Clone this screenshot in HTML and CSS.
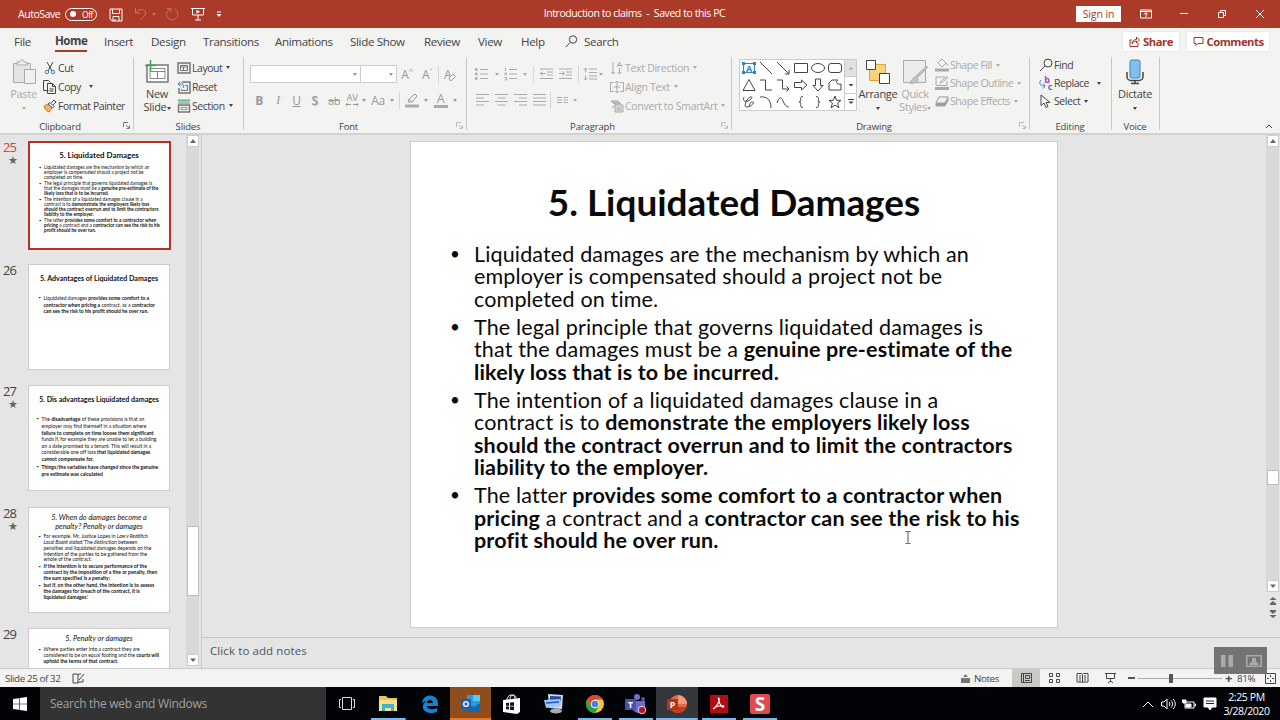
FILE: index.html
```
<!DOCTYPE html>
<html lang="en">
<head>
    <meta charset="UTF-8">
    <meta name="viewport" content="width=device-width, initial-scale=1.0">
    <title>Introduction to claims - Saved to this PC</title>
    <link rel="stylesheet" href="styles.css">
</head>
<body>

<!-- Title bar -->
<header class="titlebar">
    <div class="quick">
        <span class="autosave">AutoSave</span>
        <span class="toggle"><i></i>Off</span>
        <svg class="q-save" width="14" height="14" viewBox="0 0 14 14"><path d="M1 1h12v12H3l-2-2zM3.500 1v4.500h7V1M4 13V8.500h6V13M6 11v2"/></svg>
        <svg class="q-undo dim" width="14" height="14" viewBox="0 0 14 14"><path d="M1.500 1v5h5M2 5.500C5 1.500 10 1.500 11.500 5c1 3-2 5-5.500 8"/></svg>
        <b class="caret dim"></b>
        <svg class="q-redo dim" width="14" height="14" viewBox="0 0 14 14"><path d="M2 1.500h4v4M5.500 2C1 4 .500 8.500 3 11c3 3 8 2 9.500-1.500 1-3-.5-6-3-7.500"/></svg>
        <svg class="q-show" width="14" height="14" viewBox="0 0 14 14"><path d="M0 1.500h14M1.500 1.500v6.500h11V1.500M7 8v5M4 13h6"/><path class="solid" d="M5.500 2.800v4l3.500-2z"/></svg>
        <svg class="q-more" width="6" height="7" viewBox="0 0 6 7"><path d="M1 1h4"/><path class="solid" d="M.5 3h5L3 6z"/></svg>
    </div>
    <div class="doc-title">Introduction to claims &nbsp;-&nbsp; Saved to this PC</div>
    <div class="win">
        <button class="signin">Sign in</button>
        <svg width="12" height="10" viewBox="0 0 12 10"><path d="M.5 1h11v8H.5zM.5 2.500h11M6 8V4M4 5.500l2-2 2 2"/></svg>
        <svg width="12" height="10" viewBox="0 0 12 10"><path d="M2 4.500h8"/></svg>
        <svg width="12" height="10" viewBox="0 0 12 10"><path d="M2.500 3.500h5v5h-5zM4.500 3.500v-2h5v5h-2"/></svg>
        <svg width="12" height="10" viewBox="0 0 12 10"><path d="M2 1l8 8M10 1L2 9"/></svg>
    </div>
</header>

<!-- Ribbon tabs -->
<nav class="tabs">
    <a>File</a><a class="active">Home</a><a>Insert</a><a>Design</a><a>Transitions</a><a>Animations</a><a>Slide Show</a><a>Review</a><a>View</a><a>Help</a>
    <svg width="13" height="13" viewBox="0 0 13 13"><circle cx="8" cy="4.500" r="3.700"/><path d="M5.300 7.300L.8 12"/></svg>
    <a class="search">Search</a>
    <div class="actions">
        <button><svg width="11" height="11" viewBox="0 0 11 11"><path d="M3 4H1v6.500h8V7M3 8c0-3 2-4.500 4.500-4.500V1L10.500 4 7.500 7V5C5.500 5 4 6 3 8z"/></svg>Share</button>
        <button><svg width="11" height="11" viewBox="0 0 11 11"><path d="M1 1.500h9v6H5L3 9.500v-2H1z"/></svg>Comments</button>
    </div>
</nav>

<!-- Ribbon -->
<section class="ribbon">
    <div class="group clipboard">
        <div class="tools">
            <div class="big off">
                <svg width="26" height="26" viewBox="0 0 26 26"><path fill="#e4e4e6" d="M2.500 4.500h17v19h-17z"/><path d="M6 3h3c0-3 4-3 4 0h3v3H6z" fill="#eee"/><path fill="#f0f0f2" d="M13.500 10.500h11v14h-11z"/></svg>
                <span>Paste</span><span><b class="caret"></b></span>
            </div>
            <div class="rows">
                <div><svg width="14" height="14" viewBox="0 0 14 14"><path d="M4 1l5 9M10 1L5 10"/><g stroke="#2f86c5"><circle cx="4" cy="11" r="1.700"/><circle cx="10" cy="11" r="1.700"/></g></svg>Cut</div>
                <div><svg width="14" height="14" viewBox="0 0 14 14"><path d="M5.500 10.500h-5v-10h5l2 2M4.500 3.500h5l3 3v7h-8zM9.500 3.500v3h3M6.500 9h4M6.500 11h4"/></svg>Copy<b class="caret gap"></b></div>
                <div><svg width="14" height="14" viewBox="0 0 14 14"><path fill="#f3b36b" stroke="#d37a22" d="M1 7l4-2 4 4-3 4-2-1-.5-1.500L2 10z"/><path fill="#fff" d="M5 5l2-1.500 4 4L9.500 9zM8.500 4l2.500-3 2 2-3 3"/></svg>Format Painter</div>
            </div>
        </div>
        <div class="label">Clipboard<svg class="launch" width="7" height="7" viewBox="0 0 7 7"><path d="M.5 5V.5H5M3 3l3 3M6.500 3.500v3h-3"/></svg></div>
    </div>

    <div class="group slides">
        <div class="tools">
            <div class="big">
                <svg width="26" height="26" viewBox="0 0 26 26"><path fill="#fff" stroke="#777" stroke-width="1.500" d="M3 6h21v17H3z"/><path stroke="#888" d="M6 9.500h15v10H6zM6 12.500h15M13.500 12.500v7"/><path stroke="#3fa55a" stroke-width="1.500" d="M6.500 1v11M1 6.500h11"/></svg>
                <span>New</span><span>Slide<b class="caret"></b></span>
            </div>
            <div class="rows">
                <div><svg width="14" height="14" viewBox="0 0 14 14"><path fill="#eee" stroke="#777" stroke-width="1.500" d="M1 2h12v10H1z"/><path stroke="#777" d="M3.500 4.500h7v5h-7zM3.500 6h7M6.500 6v4"/></svg>Layout<b class="caret"></b></div>
                <div><svg width="14" height="14" viewBox="0 0 14 14"><path fill="#eee" stroke="#777" stroke-width="1.500" d="M5 2h8v11H2V8"/><path stroke="#777" d="M8 5.500h2.500v5h-6V9"/><path stroke="#2f86c5" d="M1 4h4c2 0 2 3 1 4M3.500 1.500L1 4l2.500 2.500"/></svg>Reset</div>
                <div><svg width="14" height="14" viewBox="0 0 14 14"><path stroke="#5fb878" stroke-width="2" d="M1 1.500h12"/><path stroke="#777" d="M1 4h12"/><path fill="#eee" stroke="#777" stroke-width="1.500" d="M1.500 6h11v7h-11z"/><path stroke="#999" d="M4 8.500h6v2H4z"/></svg>Section<b class="caret"></b></div>
            </div>
        </div>
        <div class="label plain">Slides</div>
    </div>

    <div class="group font off">
        <div class="tools stack">
            <div class="font-top">
                <span class="combo"><b class="caret"></b></span><span class="combo"><b class="caret"></b></span>
                <span>A<sup>^</sup></span><span>A<sup>ˇ</sup></span><i class="sep"></i>
                <span class="clear">A<svg width="8" height="8" viewBox="0 0 8 8"><path fill="#f3f3f1" d="M1 5l4-4 2.500 2.500-4 4H2z"/></svg></span>
            </div>
            <div class="font-bottom">
                <span class="bold">B</span><span class="ital">I</span><span class="und">U</span><span class="shadow">S</span><span class="strike">ab</span>
                <span class="av">AV<svg width="14" height="5" viewBox="0 0 14 5"><path d="M1 2.500h5M8 2.500h5M2.500 1L1 2.500 2.500 4M11.500 1L13 2.500 11.500 4"/></svg></span><b class="caret"></b>
                <span>Aa</span><b class="caret"></b><i class="sep"></i>
                <svg width="14" height="15" viewBox="0 0 14 15"><path d="M3 9l1-3 6-5 2 2-5 6zM4 6l3 3"/><path class="bar" d="M0 11.500h14v3H0z"/></svg><b class="caret"></b>
                <span class="color">A</span><b class="caret"></b>
            </div>
        </div>
        <div class="label">Font<svg class="launch" width="7" height="7" viewBox="0 0 7 7"><path d="M.5 5V.5H5M3 3l3 3M6.500 3.500v3h-3"/></svg></div>
    </div>

    <div class="group paragraph off">
        <div class="tools">
            <div class="stack para-left">
                <div class="para-top">
                    <svg width="14" height="14" viewBox="0 0 14 14"><path d="M5 2.500h8M5 7h8M5 11.500h8"/><path stroke-width="2.500" d="M0 2.500h2.500M0 7h2.500M0 11.500h2.500"/></svg><b class="caret"></b>
                    <svg width="14" height="14" viewBox="0 0 14 14"><path d="M5 2.500h8M5 7h8M5 11.500h8M1.500 1v3M.5 6h2v1.500h-2M.5 10.500h2v2.500h-2"/></svg><b class="caret"></b><i class="sep"></i>
                    <svg width="13" height="12" viewBox="0 0 13 12"><path d="M0 1h13M7 4h6M7 7h6M0 10.500h13M5.500 5.500h-5M2.500 3.500l-2 2 2 2"/></svg>
                    <svg width="13" height="12" viewBox="0 0 13 12"><path d="M0 1h13M7 4h6M7 7h6M0 10.500h13M0 5.500h5M3.500 3.500l2 2-2 2"/></svg><i class="sep"></i>
                    <svg width="14" height="14" viewBox="0 0 14 14"><path d="M6 2h8M6 5.500h8M6 9h8M6 12h8M2.500 1v4.500M.5 3l2-2 2 2M2.500 13V8.500M.5 11l2 2 2-2"/></svg><b class="caret"></b>
                </div>
                <div class="para-bottom">
                    <svg width="13" height="12" viewBox="0 0 13 12"><path d="M0 .5h13M0 4h8M0 7.500h13M0 11h8"/></svg>
                    <svg width="13" height="12" viewBox="0 0 13 12"><path d="M0 .5h13M2.500 4h8M0 7.500h13M2.500 11h8"/></svg>
                    <svg width="13" height="12" viewBox="0 0 13 12"><path d="M0 .5h13M5 4h8M0 7.500h13M5 11h8"/></svg>
                    <svg width="13" height="12" viewBox="0 0 13 12"><path d="M0 .5h13M0 4h13M0 7.500h13M0 11h13"/></svg><i class="sep"></i>
                    <svg width="11" height="8" viewBox="0 0 11 8"><path d="M0 1.500h5M6.500 1.500H11M0 4h5M6.500 4H11M0 6.500h5M6.500 6.500H11"/></svg><b class="caret"></b>
                </div>
            </div>
            <div class="rows">
                <div><svg width="14" height="14" viewBox="0 0 14 14"><path d="M3 1v12M1 11l2 2 2-2M7 6l2.500-5L12 6M8 4.500h3M9.500 7v6M7.500 11l2 2 2-2"/></svg>Text Direction<b class="caret"></b></div>
                <div><svg width="14" height="14" viewBox="0 0 14 14"><path d="M4 2.500H.5v9H4M10 2.500h3.500v9H10M7 1v12M5 3l2-2 2 2M5 11l2 2 2-2M4 7h6"/></svg>Align Text<b class="caret"></b></div>
                <div><svg width="14" height="14" viewBox="0 0 14 14"><path fill="#bbb" d="M1 2h7l3 3H4z"/><path fill="#ddd" d="M5 6h8v7H5z"/><path d="M6.500 9h5M6.500 11h5M2 9l3-3"/></svg>Convert to SmartArt<b class="caret"></b></div>
            </div>
        </div>
        <div class="label">Paragraph<svg class="launch" width="7" height="7" viewBox="0 0 7 7"><path d="M.5 5V.5H5M3 3l3 3M6.500 3.500v3h-3"/></svg></div>
    </div>

    <div class="group drawing">
        <div class="tools">
            <div class="gallery">
                <div class="shapes">
                    <svg viewBox="0 0 14 14"><path stroke="#2f86c5" d="M1.500 2.500h11v9h-11z"/><text class="glyph" x="7" y="10.500" font-size="9" fill="#2f86c5">A</text><path fill="#2f86c5" stroke="none" d="M0 1h3v3H0zM11 1h3v3h-3zM0 10h3v3H0zM11 10h3v3h-3z"/></svg>
                    <svg viewBox="0 0 14 14"><path d="M1 1l12 12"/></svg>
                    <svg viewBox="0 0 14 14"><path d="M1 1l12 12M13 9v4H9"/></svg>
                    <svg viewBox="0 0 14 14"><path d="M.5 2.500h13v9H.5z"/></svg>
                    <svg viewBox="0 0 14 14"><ellipse cx="7" cy="7" rx="6.500" ry="4.500"/></svg>
                    <svg viewBox="0 0 14 14"><rect x=".5" y="2.500" width="13" height="9" rx="2.500"/></svg>
                    <svg viewBox="0 0 14 14"><path d="M7 1.500L13 12.500H1z"/></svg>
                    <svg viewBox="0 0 14 14"><path d="M1 2h5.500v10H13"/></svg>
                    <svg viewBox="0 0 14 14"><path d="M1 2h5.500v9H13M10.500 8.500L13 11l-2.500 2.500"/></svg>
                    <svg viewBox="0 0 14 14"><path d="M.5 4.500H7.500V2l5.500 5-5.500 5V9.500H.5z"/></svg>
                    <svg viewBox="0 0 14 14"><path d="M4.500 1h5v6.500H12L7 13 2 7.500h2.500z"/></svg>
                    <svg viewBox="0 0 14 14"><path d="M1 12V5l3-3h6c-3 2-1 5 3 4v6z"/></svg>
                    <svg viewBox="0 0 14 14"><path d="M2 2c-2 5 3 6 7 2 3-3-2-3-4 1s-3 7 0 7 8-4 6-5-5 3-3 5"/></svg>
                    <svg viewBox="0 0 14 14"><path d="M1 2c7-1 11 3 11 11"/></svg>
                    <svg viewBox="0 0 14 14"><path d="M1 8c2-6 4-7 6-2s4 6 6 6"/></svg>
                    <svg viewBox="0 0 14 14"><path d="M9 1.500c-5 0 0 5.500-4 5.500 4 0-1 5.500 4 5.500"/></svg>
                    <svg viewBox="0 0 14 14"><path d="M5 1.500c5 0 0 5.500 4 5.500-4 0 1 5.500-4 5.500"/></svg>
                    <svg viewBox="0 0 14 14"><path d="M7 1l1.600 4.300H13L9.600 8l1.300 4.800L7 10.200l-3.900 2.600L4.400 8 1 5.300h4.400z"/></svg>
                </div>
                <div class="spin">
                    <span class="off"><svg width="6" height="6" viewBox="0 0 6 6"><path d="M.5 4.500h5L3 2z"/></svg></span>
                    <span><svg width="6" height="6" viewBox="0 0 6 6"><path d="M.5 2h5L3 4.500z"/></svg></span>
                    <span><svg width="6" height="6" viewBox="0 0 6 6"><path d="M0 0h6v1H0zM.5 2.500h5L3 5z"/></svg></span>
                </div>
            </div>
            <div class="big arrange">
                <svg width="26" height="26" viewBox="0 0 26 26"><path fill="#f9d27c" stroke="#e0a33e" d="M4.500 5.500h16v16h-16z"/><path fill="#fff" d="M1.500 1.500h9v9h-9zM14.500 14.500h10v10h-10z"/></svg>
                <span>Arrange</span><span><b class="caret"></b></span>
            </div>
            <div class="big off styles">
                <svg width="26" height="26" viewBox="0 0 26 26"><path fill="#ececee" d="M1.500 1.500h22v22h-22z"/><path fill="#c4c4c6" d="M25 9L16 18l-2-1L25 7zM14 18c-3 0-4 4-7 6 4 1 9 0 9-4z"/></svg>
                <span>Quick</span><span>Styles<b class="caret"></b></span>
            </div>
            <div class="rows tight off">
                <div><svg width="14" height="14" viewBox="0 0 14 14"><path d="M7 1l4 4-4 4-4-4zM11 5l2 3"/><path class="bar" d="M0 10.500h14v3H0z"/></svg>Shape Fill<b class="caret"></b></div>
                <div><svg width="14" height="14" viewBox="0 0 14 14"><path d="M10 1H1v8.500h11V5M5 7l1-2 6-4.500 1 1L7 6.500z"/><path class="bar" d="M0 11h14v3H0z"/></svg>Shape Outline<b class="caret"></b></div>
                <div><svg width="14" height="14" viewBox="0 0 14 14"><path fill="#999" d="M1 9l3-6h9v4l-3 5H1z"/><path fill="#eee" d="M4 3h9l-3 6H1z"/></svg>Shape Effects<b class="caret"></b></div>
            </div>
        </div>
        <div class="label">Drawing<svg class="launch off" width="7" height="7" viewBox="0 0 7 7"><path d="M.5 5V.5H5M3 3l3 3M6.500 3.500v3h-3"/></svg></div>
    </div>

    <div class="group editing">
        <div class="tools">
            <div class="rows tight">
                <div><svg width="14" height="14" viewBox="0 0 14 14"><circle cx="9" cy="5" r="4"/><path d="M6 8l-5 5"/></svg>Find</div>
                <div><svg width="14" height="14" viewBox="0 0 14 14"><text class="glyph" x="8" y="7" font-size="9" fill="#a14ba8">b</text><text class="glyph" x="11" y="13.500" font-size="9" fill="#2f86c5">c</text><path stroke="#2f86c5" d="M2 4c-3 4 0 6 4 6M4 7.500l2 2.500-2 2.500"/></svg>Replace<b class="caret gap"></b></div>
                <div><svg width="14" height="14" viewBox="0 0 14 14"><path fill="#fff" d="M2 1v10.500L5 9l2 4.500 2-1-2-4h4z"/></svg>Select<b class="caret"></b></div>
            </div>
        </div>
        <div class="label plain">Editing</div>
    </div>

    <div class="group voice">
        <div class="tools">
            <div class="big">
                <svg width="26" height="26" viewBox="0 0 26 26"><rect x="8" y="1" width="10" height="18" rx="1.500" fill="#83bfec" stroke="#3d83b8"/><path stroke-width="1.500" d="M5 13v4.500c0 2 1.500 4 4 4h8c2.500 0 4-2 4-4V13M13 22v3M9 24.500h8"/></svg>
                <span>Dictate</span><span><b class="caret"></b></span>
            </div>
        </div>
        <div class="label plain">Voice</div>
    </div>
    <svg class="collapse" width="8" height="5" viewBox="0 0 8 5"><path d="M1 4l3-3 3 3"/></svg>
</section>

<main class="work">
    <!-- Slide thumbnails -->
    <aside class="thumbs">
        <div class="item current">
            <div class="num">25<i>&#9733;</i></div>
            <div class="thumb t25">
                <h3>5. Liquidated Damages</h3>
                <ul>
                    <li>Liquidated damages are the mechanism by which an<br>employer is compensated should a project not be<br>completed on time.</li>
                    <li>The legal principle that governs liquidated damages is<br>that the damages must be a <b>genuine pre-estimate of the<br>likely loss that is to be incurred.</b></li>
                    <li>The intention of a liquidated damages clause in a<br>contract is to <b>demonstrate the employers likely loss<br>should the contract overrun and to limit the contractors<br>liability to the employer.</b></li>
                    <li>The latter <b>provides some comfort to a contractor when<br>pricing</b> a contract and a <b>contractor can see the risk to his<br>profit should he over run.</b></li>
                </ul>
            </div>
        </div>
        <div class="item">
            <div class="num">26</div>
            <div class="thumb t26">
                <h3>5. Advantages of Liquidated Damages</h3>
                <ul>
                    <li>Liquidated damages <b>provides some comfort to a<br>contractor when pricing a</b> contract, as a <b>contractor<br>can see the risk to his profit should he over run.</b></li>
                </ul>
            </div>
        </div>
        <div class="item">
            <div class="num">27<i>&#9733;</i></div>
            <div class="thumb t27">
                <h3>5. Dis advantages Liquidated damages</h3>
                <ul>
                    <li>The <b>disadvantage</b> of these provisions is that an<br>employer may find themself in a situation where<br><b>failure to complete on time looses them significant</b><br>funds if, for example they are unable to let a building<br>on a date promised to a tenant. This will result in a<br>considerable one off loss <b>that liquidated damages<br>cannot compensate for.</b></li>
                    <li><b>Things/the variables have changed since the genuine<br>pre estimate was calculated</b></li>
                </ul>
            </div>
        </div>
        <div class="item">
            <div class="num">28<i>&#9733;</i></div>
            <div class="thumb t28">
                <h3>5. When do damages become a<br>penalty? Penalty or damages</h3>
                <ul>
                    <li>For example, Mr. Justice Lopes in <em>Law v Redditch<br>Local Board stated:</em>'The distinction between<br>penalties and liquidated damages depends on the<br>intention of the parties to be gathered from the<br>whole of the contract.</li>
                    <li><b>If the intention is to secure performance of the<br>contract by the imposition of a fine or penalty, then<br>the sum specified is a penalty;</b></li>
                    <li><b>but if, on the other hand, the intention is to assess<br>the damages for breach of the contract, it is<br>liquidated damages.'</b></li>
                </ul>
            </div>
        </div>
        <div class="item">
            <div class="num">29</div>
            <div class="thumb t29">
                <h3>5. Penalty or damages</h3>
                <ul>
                    <li>Where parties enter into a contract they are<br>considered to be on equal footing and the <b>courts will<br>uphold the terms of that contract.</b></li>
                </ul>
            </div>
        </div>
    </aside>
    <div class="scroll left">
        <span><svg width="8" height="8" viewBox="0 0 8 8"><path d="M1 6h6L4 2z"/></svg></span><i></i><span><svg width="8" height="8" viewBox="0 0 8 8"><path d="M1 2.500h6L4 6z"/></svg></span>
    </div>

    <!-- Slide editor -->
    <div class="editor">
        <div class="canvas">
            <article class="slide">
                <h1>5. Liquidated Damages</h1>
                <ul>
                    <li>Liquidated damages are the mechanism by which an<br>employer is compensated should a project not be<br>completed on time.</li>
                    <li>The legal principle that governs liquidated damages is<br>that the damages must be a <b>genuine pre-estimate of the<br>likely loss that is to be incurred.</b></li>
                    <li>The intention of a liquidated damages clause in a<br>contract is to <b>demonstrate the employers likely loss<br>should the contract overrun and to limit the contractors<br>liability to the employer.</b></li>
                    <li>The latter <b>provides some comfort to a contractor when<br>pricing</b> a contract and a <b>contractor can see the risk to his<br>profit should he over run.</b></li>
                </ul>
                <svg class="ibeam" width="6" height="13" viewBox="0 0 6 13"><path d="M.5.5h2L3 1l.5-.5h2M3 1v11M.5 12.500h2L3 12l.5.500h2"/></svg>
            </article>
            <div class="scroll right">
                <span><svg width="8" height="8" viewBox="0 0 8 8"><path d="M1 6h6L4 2z"/></svg></span><i></i><span><svg width="8" height="8" viewBox="0 0 8 8"><path d="M1 2.500h6L4 6z"/></svg></span>
                <svg class="page" width="8" height="8" viewBox="0 0 8 8"><path d="M4 0l3.500 3h-7zM4 4l3.500 3h-7zM1 7h6v1H1z"/></svg>
                <svg class="page" width="8" height="8" viewBox="0 0 8 8"><path d="M4 8l3.500-3h-7zM4 4l3.500-3h-7zM1 0h6v1H1z"/></svg>
            </div>
        </div>
        <div class="notes">Click to add notes</div>
    </div>
</main>

<!-- Status bar -->
<footer class="status">
    <span class="count">Slide 25 of 32</span>
    <svg width="13" height="11" viewBox="0 0 13 11"><path d="M6 10H1V1h4l1 1v8l1-1h4V6M6 2l1-1h2M7 7l5-6"/></svg>
    <span class="notes-btn"><svg width="9" height="9" viewBox="0 0 9 9"><path class="solid" d="M4.500 0L7 3H2zM0 4h9v5H0z"/></svg>Notes</span>
    <div class="views">
        <span class="on"><svg width="13" height="12" viewBox="0 0 13 12"><path d="M1.500 1.500h10v9h-10zM3.500 1.500v9M5.500 3.500h4v3h-4zM5 8.500h5"/></svg></span>
        <span><svg width="13" height="12" viewBox="0 0 13 12"><path d="M1.500 1.500h3v3h-3zM8.500 1.500h3v3h-3zM1.500 7.500h3v3h-3zM8.500 7.500h3v3h-3z"/></svg></span>
        <span><svg width="13" height="12" viewBox="0 0 13 12"><path d="M1 1.500h4.500l1 1 1-1H12v8.500H7.500l-1 1-1-1H1zM6.500 2.500v8M3 4h2M3 6h2M3 8h2M8 4h2M8 6h2M8 8h2"/></svg></span>
        <span><svg width="13" height="12" viewBox="0 0 13 12"><path d="M1 1.500h11M2.500 1.500v5h8v-5M6.500 6.500V10M4 11l2.500-2L9 11"/></svg></span>
    </div>
    <div class="zoom"><span class="minus"></span><span class="track"><i></i></span><span class="plus">+</span><span class="pct">81%</span>
        <svg width="11" height="11" viewBox="0 0 11 11"><path d="M.5.5h10v10H.5zM5.500 2v2M5.500 7v2M2 5.500h2M7 5.500h2"/></svg></div>
</footer>

<!-- Taskbar -->
<footer class="taskbar">
    <span class="start"><svg width="14" height="14" viewBox="0 0 14 14"><path fill="#fff" d="M0 2l6-.8v5.500H0zM6.600 1.100L14 0v6.700H6.600zM0 7.300h6v5.500L0 12zM6.600 7.300H14V14l-7.400-1z"/></svg></span>
    <span class="searchbox">Search the web and Windows</span>
    <div class="apps">
        <span><svg width="18" height="14" viewBox="0 0 18 14"><path fill="none" stroke="#ddd" d="M4.500.5h9v12h-9zM3 2.500H1.500v8H3M15 2.500h1.500v8H15"/></svg></span>
        <span class="run"><svg width="20" height="20" viewBox="0 0 20 20"><path fill="#e9c75b" d="M1 2h7l2 2h9v13H1z"/><path fill="#f8e08a" d="M1 6h18v11H1z"/><path fill="#3fb4c8" d="M4 10h12v7h-3v-3H7v3H4z"/></svg></span>
        <span><svg width="20" height="20" viewBox="0 0 20 20"><path fill="#1583d4" d="M2 9c1-10 16-10 16 1v2H7c0 4 6 4 10 2v3.500C10 21 2 18 3 12c.5-3 2-4 4-5-2 0-4 1-5 2zm5 0h6c0-4-6-4-6 0z"/></svg></span>
        <span class="alert"><svg width="20" height="20" viewBox="0 0 20 20"><path fill="#1fa0e4" d="M6 1h13v17H6z"/><path fill="#59c8f5" d="M12 1h7v6h-7z"/><path fill="#1468b3" d="M6 9l7 4 6-4v9H6z"/><rect y="5" width="10" height="10" rx="1" fill="#1064b0"/><text class="glyph" x="5" y="13" font-size="8.500" fill="#fff">O</text></svg></span>
        <span><svg width="18" height="20" viewBox="0 0 18 20"><path fill="#fff" d="M0 6l17-2v14l-3 2-14-2z"/><path fill="none" stroke="#fff" d="M4 6c0-6 8-7 8-1M7 5c0-5 6-5 6-1"/><path fill="#111" d="M3 9l3-.3v3H3zM7 8.600l4-.4v3.500H7zM3 12.500h3v3l-3-.3zM7 12.500h4v3.700L7 15.700z"/></svg></span>
        <span><svg width="20" height="20" viewBox="0 0 20 20"><ellipse cx="12" cy="17" rx="6" ry="2.500" fill="#aaa"/><path fill="#cfd6e4" d="M4 0l15 1-1 14-13-1z"/><path fill="#2247a8" d="M6 2l11 .5-.5 5L6 7z"/><path fill="#9cc7f2" d="M0 6l16-1 1 7-15 2z"/><path stroke="#2653b5" stroke-width="1.500" d="M2 9l13-1"/></svg></span>
        <span class="run"><svg width="20" height="20" viewBox="0 0 20 20"><circle cx="10" cy="10" r="9" fill="#f7c52c"/><path fill="#df4336" d="M2.200 5.500A9 9 0 0 1 17.800 5.500H10L6 12z"/><path fill="#2c9f4b" d="M2.200 5.500A9 9 0 0 0 10 19l4-7-8 .5z"/><circle cx="10" cy="10" r="4.200" fill="#fff"/><circle cx="10" cy="10" r="3.300" fill="#3f7fe8"/></svg></span>
        <span class="run"><svg width="22" height="20" viewBox="0 0 22 20"><circle cx="12" cy="3" r="3" fill="#6c70cf"/><circle cx="18" cy="5" r="2" fill="#5256b5"/><path fill="#6a6dcb" d="M7 7h13v7c0 3-3 5-6 5s-6-2-7-5z"/><rect y="5" width="11" height="11" rx="1" fill="#4a4fb5"/><text class="glyph" x="5.500" y="13.500" font-size="8.500" fill="#fff">T</text><circle cx="17" cy="16" r="3.700" fill="#b80f2e" stroke="#ddd"/></svg></span>
        <span class="run open"><svg width="20" height="20" viewBox="0 0 20 20"><circle cx="11" cy="10" r="9" fill="#e2674a"/><path fill="#f49a7c" d="M11 1a9 9 0 0 1 9 9h-9z"/><path fill="#c23d20" d="M2.500 13h17a9 9 0 0 1-17 0z"/><rect y="5" width="11" height="11" rx="1" fill="#b7341a"/><text class="glyph" x="5.500" y="13.500" font-size="8.500" fill="#fff">P</text></svg></span>
        <span class="run"><svg width="20" height="20" viewBox="0 0 20 20"><path fill="#b30b12" d="M1 1h18v18H1z"/><path fill="none" stroke="#fff" stroke-width="1.200" d="M9.500 4c2 1 0 6-4 10-2 2-1-1 4-2s6 0 5 1-4-2-5-8z"/></svg></span>
        <span class="run"><svg width="20" height="20" viewBox="0 0 20 20"><rect width="20" height="20" rx="2" fill="#e04a50"/><text class="glyph" x="10" y="16.500" font-size="19" fill="#fff">S</text></svg></span>
    </div>
    <div class="tray">
        <svg width="12" height="8" viewBox="0 0 12 8"><path d="M1 7l5-5 5 5"/></svg>
        <svg width="15" height="12" viewBox="0 0 15 12"><path d="M.5 4H3l3-3v10L3 8H.5zM8 4c1 1 1 3 0 4M10 2.500c2 2 2 5 0 7M12 1c3 3 3 7 0 10"/></svg>
        <svg width="14" height="10" viewBox="0 0 14 10"><path d="M3 3h9v6H3zM12.500 5h1v2h-1"/><path fill="#fff" d="M4 5h5v3H4zM0 1h4v3H1z"/></svg>
        <svg width="14" height="14" viewBox="0 0 14 14"><path fill="#fff" d="M1 1h12v9H9l-2 3-2-3H1z"/><path class="lines" d="M3 4h8M3 6.500h8"/></svg>
        <div class="clock">2:25 PM<br>3/28/2020</div>
    </div>
</footer>

<!-- Recorder controls over the status bar -->
<div class="recorder">
    <svg width="12" height="12" viewBox="0 0 12 12"><path d="M0 0h4.500v12H0zM7.500 0H12v12H7.500z"/></svg>
    <svg width="16" height="12" viewBox="0 0 16 12"><path fill-rule="evenodd" d="M0 0h16v12H0zM1.500 1.500v9h13v-9zM6 3h4v3.500l2.500 2V10h-9V8.500L6 6.500z"/></svg>
</div>

</body>
</html>
```
FILE: styles.css
```
* {
    box-sizing: border-box;
}
body {
    margin: 0;
    width: 1280px;
    height: 720px;
    overflow: hidden;
    display: flex;
    flex-direction: column;
    font-family: "Open Sans", "Noto Sans", sans-serif;
    font-size: 10.500px;
    letter-spacing: -0.45px;
    color: #444;
    background-color: #e5e5e5;
    white-space: nowrap;
}
svg {
    flex: none;
    fill: none;
    stroke: currentColor;
}
button {
    font: inherit;
    letter-spacing: inherit;
    border: none;
    padding: 0;
}
.glyph {
    stroke: none;
    font-weight: bold;
    text-anchor: middle;
    letter-spacing: 0;
}
.caret {
    display: inline-block;
    border: 2px solid transparent;
    border-top: 3px solid currentColor;
    border-bottom: 0;
    width: 4px;
    height: 3px;
    margin-left: 4px;
    align-self: center;
    vertical-align: middle;
}
.caret.gap {
    margin-left: 8px;
}
.off {
    color: #aaa;
}

/* title bar */
.titlebar {
    height: 28px;
    flex: none;
    display: grid;
    grid-template-columns: 1fr auto 1fr;
    align-items: center;
    background-color: #ab3a29;
    color: #fff;
}
.doc-title {
    letter-spacing: -0.42px;
    margin-right: 11px;
    padding-bottom: 2px;
}
.quick, .win {
    display: flex;
    align-items: center;
}
.quick {
    padding-left: 18px;
}
.quick .solid {
    fill: #fff;
    stroke: none;
}
.dim {
    opacity: 0.3;
}
.autosave {
    width: 47px;
}
.toggle {
    width: 32px;
    height: 13px;
    border: 1px solid #fff;
    border-radius: 7px;
    display: flex;
    align-items: center;
    font-size: 8.500px;
    gap: 6px;
    padding-left: 4px;
}
.toggle i {
    width: 6px;
    height: 6px;
    border-radius: 50%;
    background-color: #fff;
}
.q-save {
    margin: 2px 0 0 12px;
}
.q-undo {
    margin-left: 11px;
}
.q-redo {
    margin-left: 9px;
}
.q-show {
    margin-left: 12px;
}
.q-more {
    margin-left: 11px;
}
.win {
    justify-content: flex-end;
    padding-right: 14px;
    gap: 26px;
}
.signin {
    width: 45px;
    height: 16px;
    background-color: #fff;
    color: #ab3a29;
    margin-right: -7px;
    letter-spacing: -0.1px;
}

/* tabs */
.tabs {
    height: 27px;
    flex: none;
    display: grid;
    grid-template-columns: 41px 49px 47px 52px 72px 75px 74px 54px 43px 44px 19px 60px 1fr;
    align-items: center;
    padding: 0 11px 0 14px;
    background-color: #f3f3f1;
    font-size: 11.600px;
    letter-spacing: -0.35px;
}
.tabs .active {
    font-weight: bold;
    letter-spacing: -0.5px;
    width: 32px;
    height: 24px;
    align-self: start;
    line-height: 26px;
    border-bottom: 2px solid #ab3a29;
}
.actions {
    display: flex;
    justify-content: flex-end;
    gap: 8px;
}
.actions button {
    height: 19px;
    width: 56px;
    display: flex;
    align-items: center;
    justify-content: center;
    gap: 3px;
    background-color: #fff;
    box-shadow: 0 0 1px #bbb;
    color: #a4342a;
    font-size: 11.300px;
    font-weight: bold;
    letter-spacing: -0.5px;
}
.actions button + button {
    width: 82px;
}

/* ribbon */
.ribbon {
    height: 80px;
    flex: none;
    display: flex;
    background-color: #f3f3f1;
    border-bottom: 2px solid #d2d2d0;
}
.group {
    position: relative;
    padding-top: 1px;
}
.group::after {
    content: "";
    position: absolute;
    right: 0;
    top: 2px;
    bottom: 3px;
    width: 1px;
    background-color: #c8c8c6;
}
.clipboard {
    width: 134px;
}
.slides {
    width: 110px;
}
.font {
    width: 223px;
}
.paragraph {
    width: 265px;
}
.drawing {
    width: 298px;
}
.editing {
    width: 82px;
}
.voice {
    width: 48px;
}
.tools {
    display: flex;
    height: 62px;
}
.label {
    display: flex;
    justify-content: center;
    align-items: center;
    height: 16px;
    font-size: 9.500px;
    color: #444;
    letter-spacing: -0.15px;
    padding-right: 14px;
}
.label.plain {
    padding-right: 2px;
}
.launch {
    position: absolute;
    right: 4px;
    bottom: 4px;
    color: #777;
}
.off .launch, .launch.off {
    color: #bbb;
}
.big {
    width: 46px;
    display: flex;
    flex-direction: column;
    align-items: center;
    padding-top: 3px;
    line-height: 13px;
    font-size: 11px;
    letter-spacing: -0.3px;
}
.big svg + span {
    margin-top: 2px;
}
.big span {
    height: 13px;
}
.big span > .caret:only-child {
    margin-left: 0;
}
.clipboard .big {
    width: 43px;
    padding-left: 4px;
}
.slides .big {
    width: 43px;
    padding-left: 3px;
}
.big .caret {
    margin-left: 3px;
}
.rows > div {
    height: 19px;
    display: flex;
    align-items: center;
}
.rows {
    padding-top: 2px;
}
.rows svg {
    margin-right: 1px;
}
.rows.tight > div {
    height: 18px;
}
.rows.tight {
    padding-top: 0;
}
.paragraph .rows {
    letter-spacing: -0.3px;
}
.bar {
    fill: #aaa;
    stroke: none;
}
.stack {
    flex-direction: column;
}
.sep {
    width: 1px;
    height: 17px;
    background-color: #d5d5d3;
}
.font-top, .font-bottom, .para-top, .para-bottom {
    display: grid;
    align-items: center;
    justify-items: center;
    height: 26px;
}
.font-top .caret, .font-bottom .caret, .para-top .caret, .para-bottom .caret {
    margin-left: 0;
}
.font .tools {
    padding: 5px 0 0 6px;
}
.font-top {
    grid-template-columns: 111px 36px 20px 20px 3px 20px;
    font-size: 12px;
    color: #999;
}
.font-top sup {
    font-size: 8px;
    line-height: 0;
}
.clear {
    display: flex;
    align-items: flex-end;
}
.clear svg {
    margin: 0 0 2px -3px;
}
.combo {
    width: 100%;
    height: 18px;
    border: 1px solid #ccc;
    background-color: #fff;
    display: flex;
    justify-content: flex-end;
    padding-right: 3px;
}
.combo + .combo {
    border-left: 0;
}
.font-bottom {
    grid-template-columns: 18px 20px 17px 19px 20px 16px 8px 20px 7px 8px 18px 10px 19px 10px;
    font-size: 12px;
    color: #999;
}
.bold {
    font-weight: bold;
}
.ital {
    font-family: "Liberation Serif", serif;
    font-style: italic;
}
.und {
    text-decoration: underline;
}
.shadow {
    text-shadow: 1px 1px 1px #ccc;
    font-weight: 600;
}
.strike {
    text-decoration: line-through;
    font-size: 11px;
}
.color {
    width: 14px;
    height: 15px;
    line-height: 12px;
    text-align: center;
    border-bottom: 3px solid #aaa;
}
.av {
    display: flex;
    flex-direction: column;
    align-items: center;
    font-size: 9.500px;
    line-height: 9px;
}
.para-left {
    width: 143px;
    padding: 5px 0 0 6px;
}
.para-top {
    grid-template-columns: 18px 11px 18px 10px 6px 20px 18px 8px 16px 6px;
}
.para-bottom {
    grid-template-columns: 18px 20px 18px 20px 3px 20px 6px;
}
.gallery {
    display: flex;
    width: 118px;
    height: 52px;
    margin: 3px 0 0 7px;
    border: 1px solid #ccc;
    background-color: #fff;
}
.shapes {
    flex: 1;
    display: grid;
    grid-template-columns: repeat(6, 1fr);
    place-items: center;
}
.shapes svg {
    width: 14px;
    height: 14px;
}
.spin {
    width: 12px;
    display: flex;
    flex-direction: column;
    border-left: 1px solid #ccc;
}
.spin span {
    flex: 1;
    display: flex;
    align-items: center;
    justify-content: center;
}
.spin svg, .scroll svg {
    fill: currentColor;
    stroke: none;
}
.spin span + span {
    border-top: 1px solid #ccc;
}
.spin .off {
    background-color: #e1e1df;
}
.arrange {
    width: 42px;
}
.styles {
    width: 32px;
    margin-right: 4px;
}
.editing .rows {
    padding-left: 9px;
}
.collapse {
    margin: 69px 7px 0 auto;
}

/* work area */
.work {
    height: 533px;
    flex: none;
    display: flex;
    overflow: hidden;
}
.thumbs {
    width: 186px;
    height: 533px;
    overflow: hidden;
    padding: 6px 0 0 3px;
}
.item {
    display: flex;
    height: 121.400px;
}
.item.current {
    height: 123px;
}
.num {
    width: 25px;
    font-size: 13px;
    line-height: 13px;
    letter-spacing: -0.9px;
}
.num i {
    display: block;
    font-style: normal;
    font-size: 11px;
    line-height: 12px;
    padding-left: 5px;
    color: #666;
}
.current .num {
    color: #c5493a;
}
.thumb {
    width: 142px;
    height: 106px;
    border: 1px solid #ccc;
    background-color: #fff;
    color: #111;
    font-family: Lato, sans-serif;
    font-size: 5px;
    line-height: 5px;
    letter-spacing: 0;
    font-variant-ligatures: none;
}
.current .thumb {
    height: 109px;
    width: 143px;
    margin-left: -0.500px;
    border: 2px solid #b83020;
}
.thumb h3 {
    margin: 0;
    text-align: center;
    font-size: 7.100px;
    line-height: 9px;
}
.thumb ul {
    margin: 0;
    padding-left: 14.500px;
}
.thumb li, .slide li {
    list-style: none;
    position: relative;
}
.thumb li::before {
    content: "•";
    position: absolute;
    left: -5px;
    font-size: 4px;
}
.t25 {
    font-size: 4.650px;
}
.t25 h3 {
    padding: 8px 0 5px;
    font-size: 7.900px;
}
.t25 li {
    margin-bottom: 1.100px;
}
.t26 h3 {
    padding: 9px 0 12px;
}
.t26 {
    line-height: 6.700px;
}
.t27 h3 {
    padding: 9px 0 12px;
}
.t27 {
    line-height: 6.600px;
}
.t27 ul {
    padding-left: 12.500px;
}
.t27 li {
    margin-bottom: 1.500px;
}
.t28 h3, .t29 h3 {
    font-size: 7.400px;
    font-weight: normal;
    font-style: italic;
    padding: 5px 0 3px;
}
.t28, .t29 {
    line-height: 5.900px;
}
.t29 h3 {
    padding-bottom: 4px;
}
.t28 li {
    margin-bottom: 1px;
}
.scroll {
    display: flex;
    flex-direction: column;
    align-items: center;
    width: 13px;
    background-color: #d9d9d9;
    color: #666;
}
.scroll span {
    width: 12px;
    height: 12px;
    flex: none;
    display: flex;
    align-items: center;
    justify-content: center;
    background-color: #fff;
    border: 1px solid #ccc;
}
.scroll i {
    width: 12px;
    background-color: #fff;
    border: 1px solid #bbb;
}
.left {
    height: 531px;
}
.left i {
    height: 70px;
    margin: 379px 0 58px;
}
.right {
    height: 457px;
    margin: 0 1px 0 auto;
}
.right i {
    height: 15px;
    margin: 323px 0 95px;
    flex: none;
}
.scroll .page {
    margin-top: 5px;
}
.editor {
    flex: 1;
    margin-left: 2px;
    border-left: 1px solid #c6c6c6;
    display: flex;
    flex-direction: column;
}
.canvas {
    height: 503px;
    display: flex;
    border-bottom: 1px solid #c6c6c6;
}
.slide {
    position: relative;
    width: 648px;
    height: 487px;
    margin: 6px 0 0 208px;
    background-color: #fff;
    border: 1px solid #ccc;
    font-family: Lato, sans-serif;
    font-size: 21.500px;
    line-height: 22.400px;
    letter-spacing: 0.15px;
    font-variant-ligatures: none;
    color: #0a0a0a;
}
.slide h1 {
    margin: 0;
    padding-top: 37px;
    font-size: 36.900px;
    line-height: 46px;
    text-align: center;
    letter-spacing: 0;
}
.slide ul {
    margin: 0;
    padding: 18px 0 0 63px;
}
.slide li {
    margin-bottom: 5.800px;
}
.slide li::before {
    content: "•";
    position: absolute;
    left: -24px;
    font-size: 17px;
}
.ibeam {
    position: absolute;
    left: 494px;
    top: 389px;
    color: #555;
}
.notes {
    padding: 5px 0 0 8px;
    font-size: 11.500px;
    letter-spacing: 0.1px;
    color: #555;
}

/* status bar */
.status {
    height: 19px;
    flex: none;
    display: flex;
    align-items: center;
    background-color: #f3f3f1;
    border-top: 1px solid #ccc;
    padding-left: 5px;
    font-size: 9.800px;
    letter-spacing: -0.4px;
}
.count {
    width: 67px;
}
.notes-btn {
    display: flex;
    align-items: center;
    gap: 4px;
    margin-left: 876px;
    width: 51px;
}
.solid {
    fill: #777;
    stroke: none;
}
.views {
    display: flex;
    height: 18px;
}
.views span {
    width: 28px;
    display: flex;
    align-items: center;
    justify-content: center;
}
.views .on {
    background-color: #c9c9c6;
}
.zoom {
    display: flex;
    align-items: center;
    padding-left: 4px;
}
.minus {
    width: 7px;
    height: 2px;
    background-color: #555;
}
.track {
    width: 84px;
    height: 1px;
    margin: 0 3px 0 3px;
    background-color: #aaa;
    display: flex;
    align-items: center;
}
.track i {
    width: 4px;
    height: 9px;
    margin-left: 31px;
    background-color: #555;
}
.plus {
    width: 12px;
    font-size: 13px;
    font-weight: bold;
}
.pct {
    width: 28px;
}

/* taskbar */
.taskbar {
    height: 33px;
    flex: none;
    display: flex;
    background-color: #020307;
}
.taskbar svg {
    stroke: none;
}
.start {
    width: 40px;
    display: flex;
    align-items: center;
    justify-content: center;
}
.searchbox {
    width: 286px;
    background-color: #333;
    color: #a0a0a0;
    font-size: 12px;
    letter-spacing: -0.3px;
    line-height: 33px;
    padding-left: 10px;
}
.apps {
    display: flex;
}
.apps span {
    width: 41.300px;
    display: flex;
    align-items: center;
    justify-content: center;
    border: solid transparent;
    border-width: 0 3px 0 4px;
}
.apps .run {
    background: linear-gradient(#76b9ed, #76b9ed) bottom / 100% 2px no-repeat padding-box;
}
.apps .open {
    border-width: 0;
    background-color: #34383c;
}
.apps .alert {
    border: 0;
    background-color: #8f4d1e;
    box-shadow: inset 0 -2px #f07818;
}
.tray {
    margin-left: auto;
    display: flex;
    align-items: center;
    gap: 6.500px;
    padding-right: 10px;
    color: #fff;
}
.tray svg {
    stroke: #fff;
}
.tray .lines {
    stroke: #222;
}
.clock {
    width: 47px;
    text-align: center;
    font-size: 10.500px;
    line-height: 14px;
    letter-spacing: -0.4px;
}
.recorder {
    position: absolute;
    left: 1214px;
    top: 647px;
    width: 53px;
    height: 27px;
    display: flex;
    align-items: center;
    justify-content: space-between;
    padding: 0 5px 0 7px;
    background-color: rgba(105, 105, 105, 0.92);
}
.recorder svg {
    fill: #aaa;
    stroke: none;
}
```
